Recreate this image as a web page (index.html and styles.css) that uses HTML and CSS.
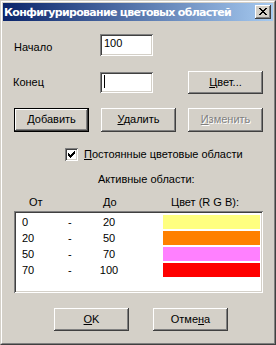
FILE: index.html
```html
<!DOCTYPE html>
<html>
<head>
<meta charset="utf-8">
<link rel="stylesheet" href="styles.css">
</head>
<body>
<div class="window">
  <div class="frame">
    <div class="titlebar">
      <span class="title">Конфигурирование цветовых областей</span>
      <div class="close">
        <svg width="8" height="7" viewBox="0 0 8 7" shape-rendering="crispEdges">
          <path d="M0 0h2v1h-2zM6 0h2v1h-2zM1 1h2v1h-2zM5 1h2v1h-2zM2 2h4v1h-4zM3 3h2v1h-2zM2 4h4v1h-4zM1 5h2v1h-2zM5 5h2v1h-2zM0 6h2v1h-2zM6 6h2v1h-2z" fill="#000"/>
        </svg>
      </div>
    </div>
    <div class="content">
      <div class="row row-start">
        <span class="label label-start">Начало</span>
        <div class="edit">100</div>
      </div>
      <div class="row row-end">
        <span class="label label-end">Конец</span>
        <div class="edit edit-end"><span class="caret"></span></div>
        <div class="btn btn-color"><span><u>Ц</u>вет...</span></div>
      </div>
      <div class="row row-buttons">
        <div class="btn btn-default"><span><u>Д</u>обавить</span></div>
        <div class="btn"><span><u>У</u>далить</span></div>
        <div class="btn btn-disabled"><span><u>И</u>зменить</span></div>
      </div>
      <div class="row row-check">
        <div class="checkbox">
          <svg width="7" height="7" viewBox="0 0 7 7" shape-rendering="crispEdges">
            <path d="M6 0h1v1h-1zM5 1h2v1h-2zM0 2h1v1h-1zM4 2h3v1h-3zM0 3h2v1h-2zM3 3h3v1h-3zM0 4h5v1h-5zM1 5h3v1h-3zM2 6h1v1h-1z" fill="#000"/>
          </svg>
        </div>
        <span class="check-label"><u>П</u>остоянные цветовые области</span>
      </div>
      <div class="active-title">Активные области:</div>
      <div class="headers">
        <span class="h-from">От</span>
        <span class="h-to">До</span>
        <span class="h-color">Цвет (R G B):</span>
      </div>
      <div class="listbox">
        <div class="item">
          <span class="c-from">0</span><span class="c-dash">-</span><span class="c-to">20</span>
          <span class="bar bar-yellow"></span>
        </div>
        <div class="item">
          <span class="c-from">20</span><span class="c-dash">-</span><span class="c-to">50</span>
          <span class="bar bar-orange"></span>
        </div>
        <div class="item">
          <span class="c-from">50</span><span class="c-dash">-</span><span class="c-to">70</span>
          <span class="bar bar-pink"></span>
        </div>
        <div class="item">
          <span class="c-from">70</span><span class="c-dash">-</span><span class="c-to">100</span>
          <span class="bar bar-red"></span>
        </div>
      </div>
      <div class="row row-ok">
        <div class="btn"><span><u>O</u>K</span></div>
        <div class="btn"><span>Отме<u>н</u>а</span></div>
      </div>
    </div>
  </div>
</div>
</body>
</html>
```
FILE: styles.css
```css
* {
  box-sizing: border-box;
}
html, body {
  margin: 0;
  padding: 0;
  background: #d4d0c8;
}
body {
  font-family: "Liberation Sans", Arial, sans-serif;
  font-size: 11px;
  line-height: 13px;
  color: #000;
}
u {
  text-decoration: underline;
  text-underline-offset: 1px;
}
.window {
  width: 276px;
  height: 345px;
  border: 1px solid;
  border-color: #d4d0c8 #404040 #404040 #d4d0c8;
  background: #d4d0c8;
}
.frame {
  height: 100%;
  border: 1px solid;
  border-color: #fff #808080 #808080 #fff;
  padding: 1px;
}
.titlebar {
  height: 18px;
  display: flex;
  align-items: center;
  justify-content: space-between;
  padding: 0 2px 0 1px;
  background: linear-gradient(to right, #0a246a, #a6caf0);
  overflow: hidden;
}
.title {
  color: #fff;
  font-family: "DejaVu Sans", Tahoma, sans-serif;
  font-weight: bold;
  font-size: 11px;
  line-height: 13px;
  letter-spacing: -0.7px;
  white-space: nowrap;
  min-width: 0;
}
.close {
  flex: 0 0 16px;
  width: 16px;
  height: 14px;
  background: #d4d0c8;
  box-shadow: inset -1px -1px #404040, inset 1px 1px #fff, inset -2px -2px #808080, inset 2px 2px #d4d0c8;
  display: flex;
  align-items: center;
  justify-content: center;
  padding: 0 1px 1px 0;
}
.close svg {
  display: block;
}
.content {
  padding-left: 11px;
}
.row {
  display: flex;
  align-items: flex-start;
}
.row-start {
  margin-top: 13px;
}
.label {
  width: 86px;
}
.label-start {
  margin-top: 7px;
}
.label-end {
  margin-top: 5px;
  margin-left: -1px;
  width: 87px;
}
.edit {
  width: 53px;
  height: 22px;
  background: #fff;
  box-shadow: inset 1px 1px #808080, inset -1px -1px #fff, inset 2px 2px #404040, inset -2px -2px #d4d0c8;
  padding: 3px 4px 0 4px;
}
.edit-end {
  margin-top: 1px;
  height: 21px;
  padding-top: 3px;
}
.caret {
  display: block;
  width: 1px;
  height: 13px;
  background: #000;
}
.row-end {
  margin-top: 15px;
}
.btn {
  width: 75px;
  height: 23px;
  background: #d4d0c8;
  box-shadow: inset -1px -1px #404040, inset 1px 1px #fff, inset -2px -2px #808080, inset 2px 2px #d4d0c8;
  display: flex;
  align-items: center;
  justify-content: center;
  padding-bottom: 1px;
}
.btn-color {
  margin-left: 35px;
}
.row-buttons {
  margin-top: 14px;
  gap: 12px;
}
.row-buttons .btn {
  height: 24px;
}
.btn-default {
  border: 1px solid #000;
}
.btn-disabled {
  color: #808080;
  text-shadow: 1px 1px 0 #fff;
}
.row-check {
  margin-top: 16px;
  padding-left: 51px;
  align-items: center;
  gap: 6px;
}
.checkbox {
  width: 13px;
  height: 13px;
  background: #fff;
  box-shadow: inset 1px 1px #808080, inset -1px -1px #fff, inset 2px 2px #404040, inset -2px -2px #d4d0c8;
  display: flex;
  align-items: center;
  justify-content: center;
}
.checkbox svg {
  display: block;
}
.check-label {
  white-space: nowrap;
}
.active-title {
  margin-top: 12px;
  padding-left: 84px;
}
.headers {
  margin-top: 10px;
  display: flex;
}
.h-from {
  margin-left: 15px;
  width: 74px;
}
.h-to {
  width: 68px;
}
.listbox {
  margin-top: 2px;
  width: 249px;
  height: 82px;
  background: #fff;
  box-shadow: inset 1px 1px #808080, inset -1px -1px #fff, inset 2px 2px #404040, inset -2px -2px #d4d0c8;
  padding: 2px 2px 2px 8px;
}
.item {
  display: grid;
  grid-template-columns: 46px 10px 62px 1fr;
  align-items: center;
  height: 14px;
  margin-top: 2px;
}
.c-to {
  text-align: center;
}
.bar {
  height: 14px;
  margin-left: 23px;
  margin-right: 1px;
}
.bar-yellow { background: #ffff80; }
.bar-orange { background: #ff8000; }
.bar-pink { background: #ff80ff; }
.bar-red { background: #ff0000; }
.row-ok {
  margin-top: 15px;
  padding-left: 40px;
  gap: 24px;
}
```
